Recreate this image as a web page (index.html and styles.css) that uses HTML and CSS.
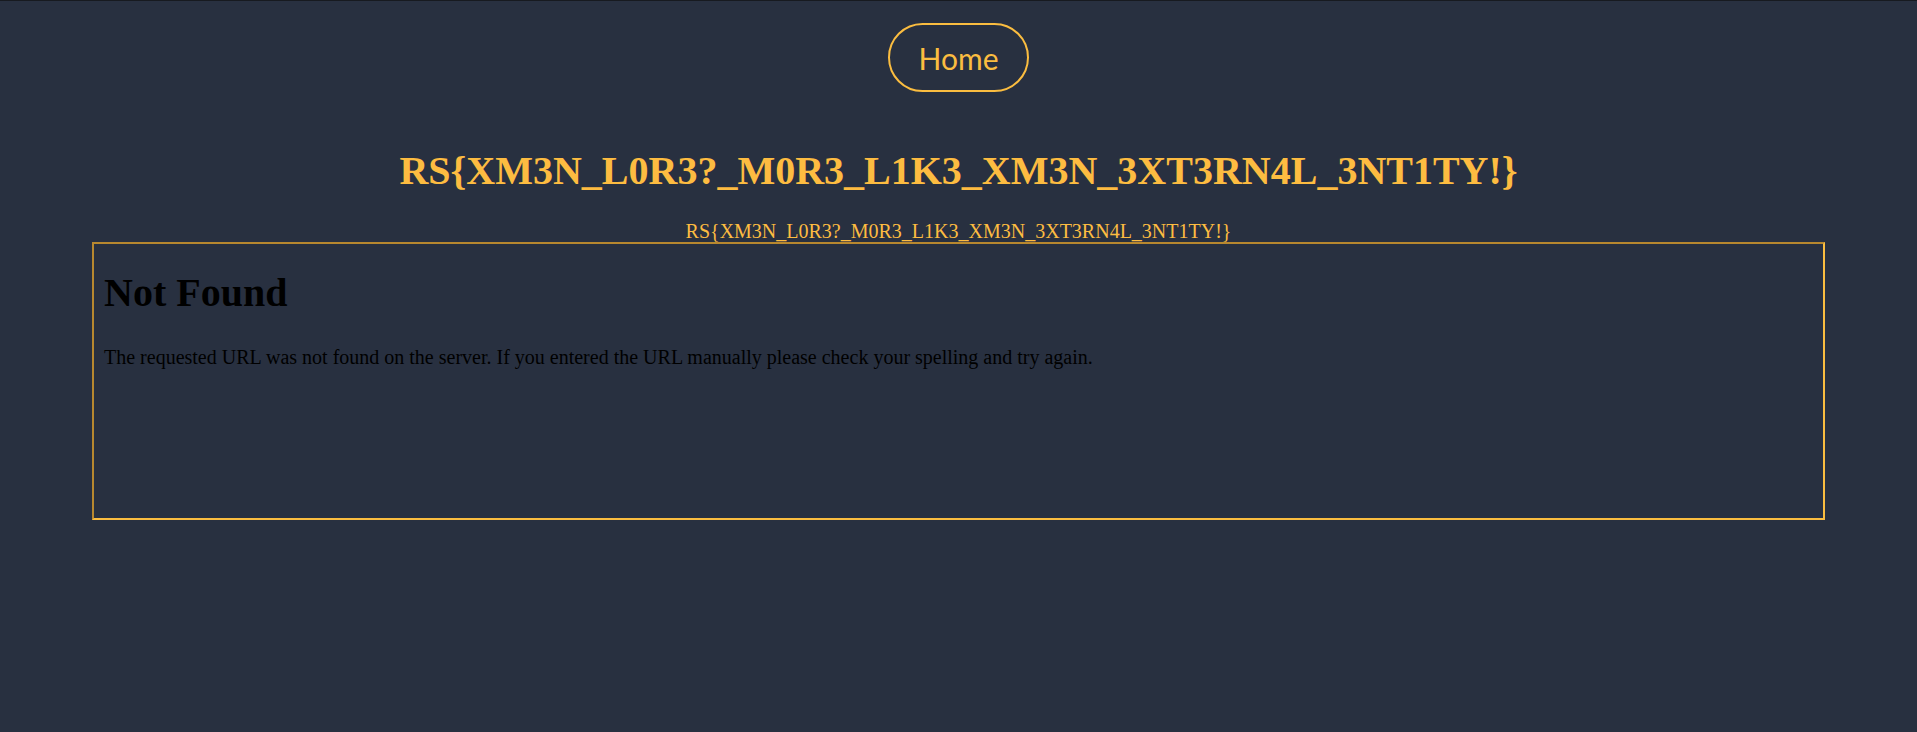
FILE: index.html
```html
<!DOCTYPE html>
<html lang="en">
<head>
<meta charset="utf-8">
<title>RS Flag</title>
<link rel="stylesheet" href="styles.css">
</head>
<body>
<div class="page">
  <nav class="nav">
    <a class="home-btn" href="#">Home</a>
  </nav>
  <h1 class="flag-title">RS{XM3N_L0R3?_M0R3_L1K3_XM3N_3XT3RN4L_3NT1TY!}</h1>
  <div class="flag-sub">RS{XM3N_L0R3?_M0R3_L1K3_XM3N_3XT3RN4L_3NT1TY!}</div>
  <div class="frame">
    <h1 class="frame-title">Not Found</h1>
    <p class="frame-text">The requested URL was not found on the server. If you entered the URL manually please check your spelling and try again.</p>
  </div>
</div>
</body>
</html>
```

FILE: styles.css
```css
html, body {
  margin: 0;
  padding: 0;
  height: 100%;
}

body {
  background: #283040;
  font-family: "Liberation Serif", "Times New Roman", serif;
}

.page {
  border-top: 1px solid #171a20;
  min-height: 100%;
  box-sizing: border-box;
  display: flex;
  flex-direction: column;
  align-items: center;
}

.nav {
  padding-top: 22px;
  display: flex;
  justify-content: center;
}

.home-btn {
  display: inline-flex;
  align-items: center;
  justify-content: center;
  box-sizing: border-box;
  height: 69px;
  padding: 0 29px;
  border: 2px solid #fbbd40;
  border-radius: 35px;
  color: #fbbd40;
  font-family: Lato, "Open Sans", sans-serif;
  font-size: 30px;
  text-decoration: none;
  line-height: 1;
}

.flag-title {
  margin: 57px 0 0;
  font-size: 40px;
  line-height: 44px;
  font-weight: bold;
  color: #fdbc41;
  text-align: center;
}

.flag-sub {
  margin-top: 27px;
  font-size: 20px;
  line-height: 22px;
  color: #fdbc41;
  text-align: center;
}

.frame {
  margin-top: 0;
  width: 1733px;
  height: 278px;
  box-sizing: border-box;
  border-style: solid;
  border-width: 2px;
  border-color: #b8882f #fbbd40 #fbbd40 #b8882f;
  padding: 0 10px;
  color: #000;
}

.frame-title {
  margin: 27px 0 0;
  font-size: 40px;
  line-height: 44px;
  font-weight: bold;
}

.frame-text {
  margin: 31px 0 0;
  font-size: 20px;
  line-height: 22px;
}
```
